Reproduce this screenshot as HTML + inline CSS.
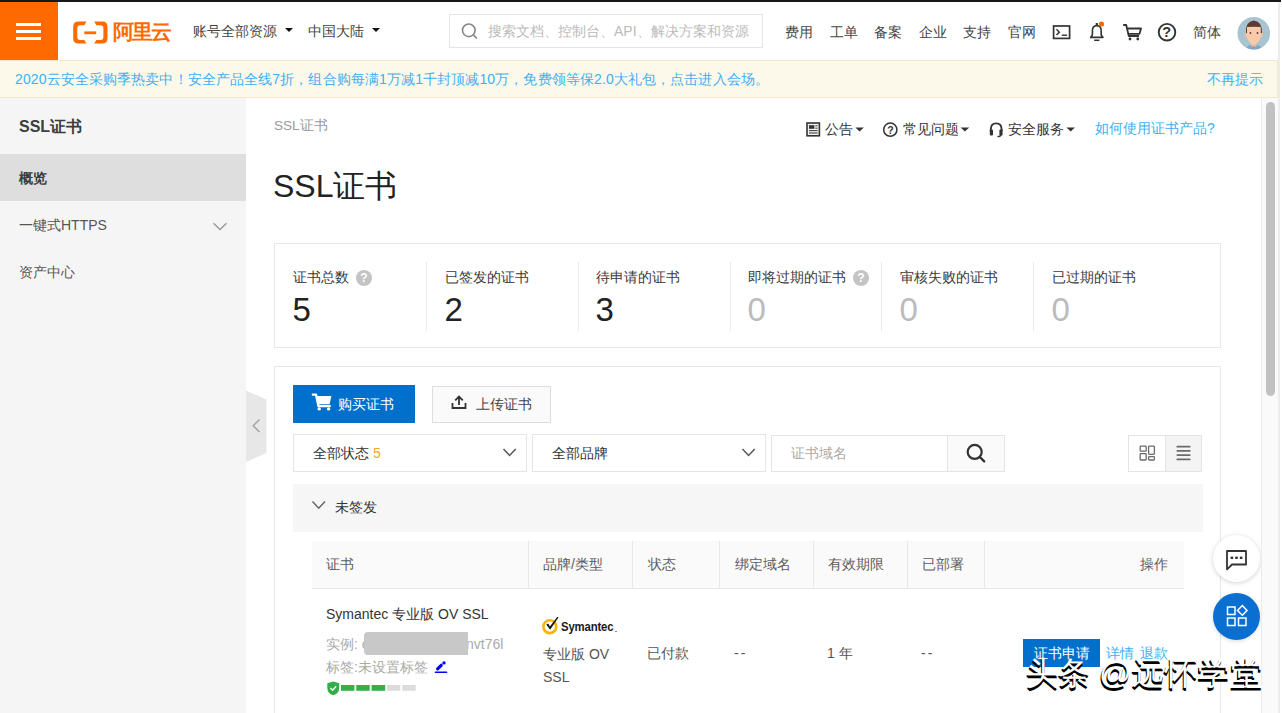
<!DOCTYPE html>
<html><head><meta charset="utf-8">
<style>
*{margin:0;padding:0;box-sizing:border-box}
html,body{width:1282px;height:713px;overflow:hidden;background:#fff;font-family:"Liberation Sans",sans-serif;color:#333}
.a{position:absolute;white-space:nowrap}
svg{position:absolute;overflow:visible}
#topbar{position:absolute;left:0;top:0;width:1281px;height:2px;background:#181818}
#burger{position:absolute;left:0;top:2px;width:58px;height:58px;background:#ff6a00}
#burger i{position:absolute;left:16px;width:25px;height:3px;background:#fff}
.nav{position:absolute;top:23px;font-size:14px;color:#444;line-height:16px;white-space:nowrap}
.tri{position:absolute;width:0;height:0;border-left:4.3px solid transparent;border-right:4.3px solid transparent;border-top:4.8px solid #111}
#notice{position:absolute;left:0;top:60px;width:1278px;height:38px;background:#fdf9ea;border:1px solid #f5e7c9;border-left:none}
#notice span{position:absolute;top:10px;letter-spacing:0.11px;font-size:14px;color:#40aff4;line-height:16px;white-space:nowrap}
#side{position:absolute;left:0;top:98px;width:246px;height:615px;background:#f5f5f5}
#main{position:absolute;left:246px;top:98px;width:1015px;height:615px;background:#fff}
#rstrip{position:absolute;left:1278px;top:2px;width:2px;height:711px;background:#ececec}
#sbar{position:absolute;left:1261px;top:98px;width:17px;height:615px;background:#fafafa;border-left:1px solid #ececec}
#sthumb{position:absolute;left:1266px;top:101.5px;width:9px;height:294px;background:#c1c1c1;border-radius:4.5px}
.lbl{top:269px;font-size:14px;line-height:16px;color:#3a3a3a}
.num{top:291.5px;margin-left:0.5px;font-size:33px;line-height:36px;color:#222}
.q{top:270px;width:16px;height:16px;border-radius:50%;background:#c4c4c4}
.q:after{content:"?";position:absolute;left:0;top:0;width:16px;text-align:center;font-size:12px;line-height:16px;font-weight:bold;color:#fff}
.th{top:556px;font-size:14px;line-height:16px;color:#5c5c5c}
.wm{color:#fff;font-weight:500;text-shadow:-1px 2px 0 #000,-0.5px 2.5px 0 #000}
</style></head><body>
<div id="topbar"></div>
<div id="burger"><i style="top:21px"></i><i style="top:28px"></i><i style="top:35px"></i></div>
<!-- logo -->
<svg style="left:0;top:0" width="1" height="1">
  <path d="M86.5 21.6 L78.5 21.6 Q73.2 21.6 73.2 27 L73.2 38.2 Q73.2 43.6 78.5 43.6 L86.5 43.6 L84.3 40 L80 40 Q77.3 40 77.3 37 L77.3 28.2 Q77.3 25.2 80 25.2 L84.3 25.2 Z" fill="#ff6a00"/>
  <path d="M94.2 21.6 L102.2 21.6 Q107.5 21.6 107.5 27 L107.5 38.2 Q107.5 43.6 102.2 43.6 L94.2 43.6 L96.4 40 L100.7 40 Q103.4 40 103.4 37 L103.4 28.2 Q103.4 25.2 100.7 25.2 L96.4 25.2 Z" fill="#ff6a00"/>
  <rect x="84.3" y="31.4" width="11.9" height="2.8" fill="#ff6a00"/>
</svg>
<div class="a" style="left:113px;top:19px;font-size:21px;line-height:26px;color:#ff6a00;font-weight:bold;letter-spacing:-2px">阿里云</div>
<div class="nav" style="left:193px">账号全部资源</div><div class="tri" style="left:284.5px;top:28px"></div>
<div class="nav" style="left:308px">中国大陆</div><div class="tri" style="left:371.5px;top:28px"></div>
<!-- search -->
<div class="a" style="left:449px;top:14px;width:314px;height:34px;border:1px solid #e4e4e4;background:#fff"></div>
<svg style="left:0;top:0" width="1" height="1">
  <circle cx="468.8" cy="30.3" r="6.3" fill="none" stroke="#888" stroke-width="1.6"/>
  <line x1="473.3" y1="34.8" x2="477" y2="38.5" stroke="#888" stroke-width="1.7"/>
</svg>
<div class="a" style="left:488px;top:23px;font-size:14px;line-height:16px;color:#bbb">搜索文档、控制台、API、解决方案和资源</div>
<div class="nav" style="left:785px;top:24px">费用</div>
<div class="nav" style="left:830px;top:24px">工单</div>
<div class="nav" style="left:874px;top:24px">备案</div>
<div class="nav" style="left:919px;top:24px">企业</div>
<div class="nav" style="left:963px;top:24px">支持</div>
<div class="nav" style="left:1008px;top:24px">官网</div>
<svg style="left:0;top:0" width="1" height="1">
  <rect x="1053.6" y="26" width="16" height="12.4" fill="none" stroke="#333" stroke-width="1.7"/>
  <path d="M1056.5 29.3 L1059.3 32.2 L1056.5 35.1" fill="none" stroke="#333" stroke-width="1.5"/>
  <line x1="1061.8" y1="35.2" x2="1067.1" y2="35.2" stroke="#333" stroke-width="1.4"/>
  <!-- bell -->
  <path d="M1090.6 37.4 L1092.4 35 L1092.4 30.8 Q1092.4 25.6 1096.8 25.6 Q1101.2 25.6 1101.2 30.8 L1101.2 35 L1103 37.4 Z" fill="none" stroke="#333" stroke-width="1.6" stroke-linejoin="round"/>
  <rect x="1095.7" y="23" width="2.2" height="2.4" fill="#333"/>
  <line x1="1094.2" y1="40.3" x2="1099.4" y2="40.3" stroke="#333" stroke-width="1.5"/>
  <circle cx="1101.5" cy="24" r="2.6" fill="#ff6a00"/>
  <!-- cart -->
  <path d="M1123.2 25 L1126.2 25 L1128.8 36 L1139 36 M1127 28.5 L1141 28.5 L1139.5 33.8 L1128.3 33.8" fill="none" stroke="#333" stroke-width="1.8" stroke-linejoin="round"/>
  <circle cx="1130" cy="39" r="1.4" fill="#333"/><circle cx="1137.8" cy="39" r="1.4" fill="#333"/>
  <!-- help -->
  <circle cx="1167" cy="32.2" r="8.3" fill="none" stroke="#333" stroke-width="1.9"/>
</svg>
<div class="a" style="left:1162.3px;top:23.2px;font-size:14.5px;line-height:18px;font-weight:bold;color:#333">?</div>
<div class="nav" style="left:1193px;top:24px">简体</div>
<svg style="left:0;top:0" width="1" height="1">
  <defs><clipPath id="av"><circle cx="1253.8" cy="33.3" r="16.3"/></clipPath></defs>
  <circle cx="1253.8" cy="33.3" r="16.3" fill="#a9c4d1"/>
  <g clip-path="url(#av)">
    <path d="M1244 52 Q1246 46 1250.5 45 L1257 45 Q1261.5 46 1263.5 52 Z" fill="#7fa6c2"/>
    <rect x="1251" y="41" width="5.6" height="5.5" fill="#f0b79a"/>
    <ellipse cx="1246.3" cy="35" rx="1.6" ry="2.3" fill="#f3bd9c"/><ellipse cx="1261.3" cy="35" rx="1.6" ry="2.3" fill="#f3bd9c"/><path d="M1246.8 29 Q1246.8 22 1253.8 21.5 Q1261 22 1261 29 L1261 36 Q1259 44 1253.8 44.5 Q1248.5 44 1246.5 36 Z" fill="#f9caa9"/>
    <path d="M1246 33 Q1245 21.5 1253.8 20.5 Q1262.5 21.5 1262 33 L1260.8 33 L1260.8 27 Q1254 26.5 1247 27 L1247 33 Z" fill="#5b3b33"/>
    <circle cx="1250.5" cy="33" r="0.9" fill="#5b3b33"/><circle cx="1257.5" cy="33" r="0.9" fill="#5b3b33"/>
  </g>
</svg>
<div id="notice"><span style="left:15px">2020云安全采购季热卖中！安全产品全线7折，组合购每满1万减1千封顶减10万，免费领等保2.0大礼包，点击进入会场。</span><span style="left:1207px">不再提示</span></div>
<div id="side">
  <div class="a" style="left:19px;top:20px;font-size:16px;line-height:18px;font-weight:bold;color:#3d3d3d">SSL证书</div>
  <div class="a" style="left:0;top:56px;width:246px;height:47px;background:#dedede"></div>
  <div class="a" style="left:19px;top:72px;font-size:14px;line-height:16px;font-weight:bold;color:#3d3d3d">概览</div>
  <div class="a" style="left:19px;top:119px;font-size:14px;line-height:16px;color:#555">一键式HTTPS</div>
  <svg style="left:0;top:0" width="1" height="1"><path d="M213.5 125.2 L220 131.6 L226.5 125.2" fill="none" stroke="#999" stroke-width="1.4"/></svg>
  <div class="a" style="left:19px;top:166px;font-size:14px;line-height:16px;color:#555">资产中心</div>
</div>
<div id="main">
 <div class="a" style="left:28px;top:20px;font-size:13.5px;line-height:16px;color:#999">SSL证书</div>
 <div class="a" style="left:27px;top:69px;font-size:32px;line-height:38px;color:#222">SSL证书</div>
</div>
<!-- toolbar -->
<svg style="left:0;top:0" width="1" height="1">
  <rect x="807" y="123" width="12.4" height="12.8" fill="#f0f0f0" stroke="#333" stroke-width="1.6"/>
  <rect x="809" y="125.2" width="5.4" height="3.6" fill="#333"/>
  <line x1="815.3" y1="125.8" x2="817.6" y2="125.8" stroke="#444" stroke-width="1"/>
  <line x1="815.3" y1="128.2" x2="817.6" y2="128.2" stroke="#444" stroke-width="1"/>
  <line x1="809" y1="130.6" x2="817.6" y2="130.6" stroke="#444" stroke-width="1.1"/>
  <line x1="809" y1="133" x2="817.6" y2="133" stroke="#444" stroke-width="1.1"/>
  <path d="M855.4 127.4 L863.8 127.4 L859.6 131.4 Z" fill="#333"/>
  <circle cx="890.3" cy="129.7" r="6.6" fill="none" stroke="#333" stroke-width="1.5"/>
  <path d="M960.6 127.4 L969.2 127.4 L964.9 131.4 Z" fill="#333"/>
  <path d="M990.8 131 L990.8 129.3 Q990.8 123.4 996.2 123.4 Q1001.6 123.4 1001.6 129.3 L1001.6 131" fill="none" stroke="#333" stroke-width="1.9"/>
  <rect x="989.8" y="129.4" width="3.2" height="6" rx="1" fill="#333"/>
  <rect x="999.4" y="129.4" width="3.2" height="6" rx="1" fill="#333"/>
  <path d="M1001 135 Q1000.5 136.6 997.5 136.6" fill="none" stroke="#333" stroke-width="1.3"/>
  <path d="M1066.5 127.4 L1074.9 127.4 L1070.7 131.4 Z" fill="#333"/>
</svg>
<div class="a" style="left:887.2px;top:122.5px;font-size:10.5px;line-height:14px;font-weight:bold;color:#333">?</div>
<div class="a" style="left:825px;top:121px;font-size:14px;line-height:16px;color:#333">公告</div>
<div class="a" style="left:903px;top:121px;font-size:14px;line-height:16px;color:#333">常见问题</div>
<div class="a" style="left:1008px;top:121px;font-size:14px;line-height:16px;color:#333">安全服务</div>
<div class="a" style="left:1095px;top:120px;font-size:14px;line-height:16px;color:#40aff4">如何使用证书产品?</div>
<!-- stats -->
<div class="a" style="left:274px;top:243px;width:947px;height:105px;border:1px solid #e8e8e8;background:#fff"></div>
<div class="a" style="left:426px;top:262px;width:1px;height:69px;background:#ebebeb"></div>
<div class="a" style="left:578px;top:262px;width:1px;height:69px;background:#ebebeb"></div>
<div class="a" style="left:730px;top:262px;width:1px;height:69px;background:#ebebeb"></div>
<div class="a" style="left:881px;top:262px;width:1px;height:69px;background:#ebebeb"></div>
<div class="a" style="left:1033px;top:262px;width:1px;height:69px;background:#ebebeb"></div>
<div class="lbl a" style="left:293px">证书总数</div><div class="q a" style="left:356px"></div>
<div class="lbl a" style="left:445px">已签发的证书</div>
<div class="lbl a" style="left:596px">待申请的证书</div>
<div class="lbl a" style="left:748px">即将过期的证书</div><div class="q a" style="left:853px"></div>
<div class="lbl a" style="left:900px">审核失败的证书</div>
<div class="lbl a" style="left:1052px">已过期的证书</div>
<div class="num a" style="left:292px">5</div>
<div class="num a" style="left:444px">2</div>
<div class="num a" style="left:595px">3</div>
<div class="num a" style="left:747px;color:#bbb">0</div>
<div class="num a" style="left:899px;color:#bbb">0</div>
<div class="num a" style="left:1051px;color:#bbb">0</div>

<!-- card2 -->
<div class="a" style="left:274px;top:366px;width:947px;height:360px;border:1px solid #e8e8e8;background:#fff"></div>
<svg style="left:0;top:0" width="1" height="1">
  <path d="M246 390.5 L266.5 399.5 L266.5 453 L246 462 Z" fill="#e7e7e7"/>
  <path d="M259.5 419.5 L253.2 425.8 L259.5 432" fill="none" stroke="#a5a5a5" stroke-width="1.5"/>
</svg>
<div class="a" style="left:293px;top:385px;width:122px;height:38px;background:#0070cc"></div>
<svg style="left:0;top:0" width="1" height="1">
  <path d="M312.8 394.6 L316 394.6 L318.5 406.2 L329.8 406.2" fill="none" stroke="#fff" stroke-width="2.3" stroke-linejoin="round" stroke-linecap="round"/>
  <path d="M316.2 396 L331.4 396 L329.6 404.3 L318 404.3 Z" fill="#fff"/>
  <circle cx="319.2" cy="408.9" r="1.7" fill="#fff"/><circle cx="328.6" cy="408.9" r="1.7" fill="#fff"/>
</svg>
<div class="a" style="left:338px;top:395.5px;font-size:14px;line-height:16px;color:#fff">购买证书</div>
<div class="a" style="left:432px;top:385.5px;width:119px;height:37px;background:#fafafa;border:1px solid #dedede"></div>
<svg style="left:0;top:0" width="1" height="1">
  <path d="M452.5 403 L452.5 408 L465.5 408 L465.5 403" fill="none" stroke="#333" stroke-width="1.8"/>
  <path d="M459 405 L459 396.8 M455.2 400.3 L459 396.5 L462.8 400.3" fill="none" stroke="#333" stroke-width="1.8"/>
</svg>
<div class="a" style="left:476px;top:396px;font-size:14px;line-height:16px;color:#444">上传证书</div>
<div class="a" style="left:293px;top:434px;width:234px;height:38px;border:1px solid #e4e4e4;background:#fff"></div>
<div class="a" style="left:313px;top:445px;font-size:14px;line-height:16px;color:#333">全部状态 <span style="color:#f5a623">5</span></div>
<div class="a" style="left:532px;top:434px;width:234px;height:38px;border:1px solid #e4e4e4;background:#fff"></div>
<div class="a" style="left:552px;top:445px;font-size:14px;line-height:16px;color:#333">全部品牌</div>
<svg style="left:0;top:0" width="1" height="1">
  <path d="M503.5 449 L509.6 455.5 L515.7 449" fill="none" stroke="#555" stroke-width="1.5"/>
  <path d="M742.5 449 L748.6 455.5 L754.7 449" fill="none" stroke="#555" stroke-width="1.5"/>
</svg>
<div class="a" style="left:771px;top:435px;width:177px;height:37px;border:1px solid #e4e4e4;background:#fff"></div>
<div class="a" style="left:791px;top:445px;font-size:14px;line-height:16px;color:#aaa">证书域名</div>
<div class="a" style="left:947px;top:435px;width:58px;height:37px;border:1px solid #e4e4e4;background:#fafafa"></div>
<svg style="left:0;top:0" width="1" height="1">
  <circle cx="974.7" cy="451.9" r="7" fill="none" stroke="#333" stroke-width="2.2"/>
  <line x1="979.8" y1="457" x2="984.2" y2="461.4" stroke="#333" stroke-width="2.4" stroke-linecap="round"/>
</svg>
<div class="a" style="left:1128px;top:435px;width:38px;height:37px;border:1px solid #e4e4e4;background:#fff"></div>
<div class="a" style="left:1165px;top:435px;width:37px;height:37px;border:1px solid #e4e4e4;background:#f4f4f4"></div>
<svg style="left:0;top:0" width="1" height="1">
  <rect x="1140.2" y="446.2" width="6" height="5" rx="0.8" fill="none" stroke="#6b6b6b" stroke-width="1.3"/>
  <rect x="1140.2" y="453.6" width="6" height="6.4" rx="0.8" fill="none" stroke="#6b6b6b" stroke-width="1.3"/>
  <rect x="1148.6" y="446.2" width="5.8" height="8.2" rx="0.8" fill="none" stroke="#6b6b6b" stroke-width="1.3"/>
  <rect x="1148.6" y="456.6" width="5.8" height="3.4" rx="0.8" fill="none" stroke="#6b6b6b" stroke-width="1.3"/>
  <line x1="1177.3" y1="446.7" x2="1189.8" y2="446.7" stroke="#6b6b6b" stroke-width="1.7" stroke-linecap="round"/>
  <line x1="1177.3" y1="450.9" x2="1189.8" y2="450.9" stroke="#6b6b6b" stroke-width="1.7" stroke-linecap="round"/>
  <line x1="1177.3" y1="455.1" x2="1189.8" y2="455.1" stroke="#6b6b6b" stroke-width="1.7" stroke-linecap="round"/>
  <line x1="1177.3" y1="459.4" x2="1189.8" y2="459.4" stroke="#6b6b6b" stroke-width="1.7" stroke-linecap="round"/>
</svg>
<!-- group header -->
<div class="a" style="left:293px;top:484px;width:910px;height:48px;background:#f6f6f6"></div>
<svg style="left:0;top:0" width="1" height="1">
  <path d="M312.5 501.5 L318.7 508.2 L325 501.5" fill="none" stroke="#666" stroke-width="1.5"/>
</svg>
<div class="a" style="left:335px;top:499px;font-size:14px;line-height:16px;color:#333">未签发</div>
<!-- table header -->
<div class="a" style="left:312px;top:541px;width:872px;height:48px;background:#fafafa;border-bottom:1px solid #e8e8e8"></div>
<div class="a" style="left:528px;top:541px;width:1px;height:47px;background:#e8e8e8"></div>
<div class="a" style="left:632px;top:541px;width:1px;height:47px;background:#e8e8e8"></div>
<div class="a" style="left:719px;top:541px;width:1px;height:47px;background:#e8e8e8"></div>
<div class="a" style="left:813px;top:541px;width:1px;height:47px;background:#e8e8e8"></div>
<div class="a" style="left:907px;top:541px;width:1px;height:47px;background:#e8e8e8"></div>
<div class="a" style="left:984px;top:541px;width:1px;height:47px;background:#e8e8e8"></div>
<div class="th a" style="left:326px">证书</div>
<div class="th a" style="left:543px">品牌/类型</div>
<div class="th a" style="left:648px">状态</div>
<div class="th a" style="left:735px">绑定域名</div>
<div class="th a" style="left:828px">有效期限</div>
<div class="th a" style="left:922px">已部署</div>
<div class="th a" style="left:1140px">操作</div>
<!-- row -->
<div class="a" style="left:326px;top:606px;font-size:14px;line-height:16px;color:#333">Symantec 专业版 OV SSL</div>
<div class="a" style="left:326px;top:636px;font-size:14px;line-height:16px;color:#aaa">实例: c</div><div class="a" style="left:466px;top:636px;font-size:14px;line-height:16px;color:#aaa">nvt76l</div>
<div class="a" style="left:364px;top:632px;width:104px;height:23px;background:#c8c8c8;border-radius:4px 0 0 4px"></div>
<div class="a" style="left:326px;top:659px;font-size:14px;line-height:16px;color:#aaa">标签:未设置标签</div>
<svg style="left:0;top:0" width="1" height="1">
  <path d="M437.6 668.8 L441.2 665.3" stroke="#0000ff" stroke-width="3.2" stroke-linecap="round"/><circle cx="444" cy="662.9" r="1.7" fill="#0000ff"/>
  <line x1="435.4" y1="672.3" x2="446.6" y2="672.3" stroke="#0000ff" stroke-width="1.6" stroke-linecap="round"/>
  <path d="M327.3 683.2 L333.2 681.6 L339.2 683.2 L339.2 688 Q339 693.5 333.2 695.3 Q327.5 693.5 327.3 688 Z" fill="#2fae4a"/>
  <path d="M330.4 688 L332.6 690.2 L336.2 686.2" fill="none" stroke="#fff" stroke-width="1.3"/>
  <rect x="341" y="685" width="13.4" height="5.8" fill="#33b049"/>
  <rect x="356.3" y="685" width="13.4" height="5.8" fill="#33b049"/>
  <rect x="371.6" y="685" width="13.6" height="5.8" fill="#33b049"/>
  <rect x="387.1" y="685" width="13.2" height="5.8" fill="#dcdcdc"/>
  <rect x="402.2" y="685" width="13.4" height="5.8" fill="#dcdcdc"/>
  <circle cx="549.8" cy="626.7" r="6.4" fill="none" stroke="#f7b500" stroke-width="2.6"/>
  <path d="M546.3 624.6 L550.1 629.8 L558.6 617.3 L557.2 617 L549.9 626.6 L548.2 623.6 Z" fill="#111"/>
</svg>
<div class="a" style="left:560.5px;top:619px;font-size:13px;line-height:16px;font-weight:bold;color:#1a1a1a;letter-spacing:-0.2px;transform:scaleX(0.875);transform-origin:0 0">Symantec</div><div class="a" style="left:615.3px;top:630.6px;width:1.5px;height:1.5px;background:#888"></div>
<div class="a" style="left:543px;top:643px;font-size:14px;line-height:23px;color:#555;white-space:normal;width:80px">专业版 OV SSL</div>
<div class="a" style="left:647px;top:645px;font-size:14px;line-height:16px;color:#555">已付款</div>
<div class="a" style="left:734px;top:645px;font-size:14px;line-height:16px;color:#555;letter-spacing:2.2px">--</div>
<div class="a" style="left:827px;top:645px;font-size:14px;line-height:16px;color:#555">1 年</div>
<div class="a" style="left:921px;top:645px;font-size:14px;line-height:16px;color:#555;letter-spacing:2.2px">--</div>
<div class="a" style="left:1023px;top:639px;width:77px;height:28px;background:#0070cc"></div>
<div class="a" style="left:1034px;top:645px;font-size:14px;line-height:16px;color:#fff">证书申请</div>
<div class="a" style="left:1106px;top:645px;font-size:14px;line-height:16px;color:#40aff4">详情</div>
<div class="a" style="left:1140px;top:645px;font-size:14px;line-height:16px;color:#40aff4">退款</div>
<!-- fabs -->
<div class="a" style="left:1213px;top:535px;width:47px;height:47px;border-radius:50%;background:#fff;box-shadow:0 1px 5px rgba(0,0,0,0.18)"></div>
<div class="a" style="left:1213px;top:593px;width:47px;height:47px;border-radius:50%;background:#0a6fd0;box-shadow:0 1px 4px rgba(0,0,0,0.15)"></div>
<svg style="left:0;top:0" width="1" height="1">
  <path d="M1227 551 L1246 551 L1246 564.5 L1232 564.5 L1227 569.3 Z" fill="none" stroke="#333" stroke-width="1.8" stroke-linejoin="round"/>
  <rect x="1230.6" y="556.6" width="2.6" height="2.4" fill="#333"/><rect x="1235.2" y="556.6" width="2.6" height="2.4" fill="#333"/><rect x="1239.8" y="556.6" width="2.6" height="2.4" fill="#333"/>
  <rect x="1227.5" y="607" width="7.5" height="7.5" fill="none" stroke="#fff" stroke-width="1.5"/>
  <rect x="1227.5" y="618" width="7.5" height="7.5" fill="none" stroke="#fff" stroke-width="1.5"/>
  <rect x="1238.5" y="618" width="7.5" height="7.5" fill="none" stroke="#fff" stroke-width="1.5"/>
  <path d="M1242.3 605.5 L1247 610.5 L1242.3 615.3 L1237.5 610.5 Z" fill="none" stroke="#fff" stroke-width="1.5"/>
</svg>
<!-- watermark -->
<div id="sbar"></div><div id="sthumb"></div>
<div id="rstrip"></div>
<div class="a wm" style="left:1026px;top:653px;font-size:32px;line-height:40px">头条</div><div class="a wm" style="left:1099px;top:653px;font-size:32px;line-height:40px;letter-spacing:0.8px">@远怀学堂</div>
</body></html>
